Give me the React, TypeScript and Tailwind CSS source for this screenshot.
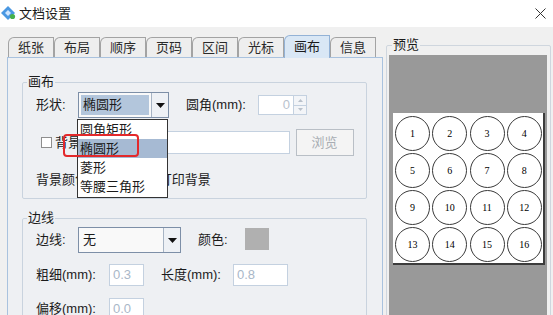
import React from 'react';

const tabs = ['纸张', '布局', '顺序', '页码', '区间', '光标', '画布', '信息'];
const shapes = ['圆角矩形', '椭圆形', '菱形', '等腰三角形'];

function Arrow() {
    return (
        <svg width="9" height="5" viewBox="0 0 9 5">
            <path d="M0 0 H9 L4.5 5 Z" fill="#111" />
        </svg>
    );
}

function Combo({ value, width, selected }: { value: string; width: string; selected?: boolean }) {
    return (
        <div className={`${width} h-[26px] border border-[#7d8fa7] bg-[#f9f9f9] flex`}>
            <div className="flex-1 p-[2px]">
                <div className={`h-full pl-[2px] leading-[20px] ${selected ? 'bg-[#b3c6dc]' : ''}`}>{value}</div>
            </div>
            <div className="w-[17px] border-l border-[#a7b4c4] bg-[#eef1f5] flex items-center justify-center">
                <Arrow />
            </div>
        </div>
    );
}

function Field({ value, width }: { value: string; width: string }) {
    return (
        <div className={`${width} h-[22px] border border-[#c4d1e0] bg-white pl-[3px] leading-[20px] text-[#a9b7c8]`}>
            {value}
        </div>
    );
}

function Checkbox() {
    return <div className="w-[11px] h-[11px] border border-[#8e8e8e] bg-white shrink-0" />;
}

export default function App() {
    return (
        <div className="relative w-[553px] h-[315px] overflow-hidden bg-[#f0f0f0] text-[13px] text-[#1b1b1b] font-['Liberation_Sans','Noto_Sans_CJK_SC',sans-serif]">
            {/* title bar */}
            <div className="h-[27px] bg-white flex items-center pl-[1px] pr-[7px]">
                <svg width="15" height="15" viewBox="0 0 15 15" className="mr-[3px]">
                    <path d="M7 0 L14 7 L7 14 L0 7 Z" fill="#4a98e2" />
                    <path d="M4 7 L7 4 L10 7 L7 10 Z" fill="#cfe6ff" />
                    <circle cx="11.5" cy="10.5" r="2.6" fill="#47b04b" />
                </svg>
                <span className="leading-[16px]">文档设置</span>
                <svg width="11" height="11" viewBox="0 0 11 11" className="ml-auto">
                    <path d="M0.5 0.5 L10.5 10.5 M10.5 0.5 L0.5 10.5" stroke="#333" strokeWidth="1" />
                </svg>
            </div>

            <div className="flex pt-[9px]">
                {/* tab pane */}
                <div className="ml-[7px] w-[376px] flex flex-col">
                    <div className="h-[21px] flex items-end pl-px">
                        {tabs.map((t) =>
                            t === '画布' ? (
                                <div
                                    key={t}
                                    className="relative z-10 -mb-px w-[46px] h-[23px] border border-b-0 border-[#93b2d6] rounded-tl-[6px] bg-[#d9e7f5] flex items-center justify-center leading-[16px]"
                                >
                                    {t}
                                </div>
                            ) : (
                                <div
                                    key={t}
                                    className="w-[46px] h-[20px] border border-b-0 border-[#a3a3a3] rounded-tl-[6px] bg-[#eeeeee] flex items-center justify-center leading-[16px] text-[#2a2a2a]"
                                >
                                    {t}
                                </div>
                            )
                        )}
                    </div>
                    <div className="h-[270px] border border-[#a9c2de] bg-[#eef0f3] pl-[14px] pt-[16px]">
                        <fieldset className="w-[345px] border border-[#c9d3de] rounded-[2px] pb-[8px]">
                            <legend className="ml-[4px] px-px leading-[16px]">画布</legend>
                            <div className="mt-[2px] h-[26px] flex items-center pl-[13px]">
                                <span className="w-[42px]">形状:</span>
                                <Combo value="椭圆形" width="w-[91px]" selected />
                                <span className="ml-[17px] w-[72px]">圆角(mm):</span>
                                <div className="w-[36px] h-[20px] border border-[#c4d1e0] bg-white text-right pr-[3px] leading-[18px] text-[#b8c2ce]">
                                    0
                                </div>
                                <div className="w-[13px] h-[20px] flex flex-col border border-l-0 border-[#c4d1e0]">
                                    <div className="flex-1 bg-[#f3f5f8] border-b border-[#c4d1e0] flex items-center justify-center">
                                        <svg width="5" height="3" viewBox="0 0 5 3"><path d="M0 3 L2.5 0 L5 3 Z" fill="#b9c1cb" /></svg>
                                    </div>
                                    <div className="flex-1 bg-[#f3f5f8] flex items-center justify-center">
                                        <svg width="5" height="3" viewBox="0 0 5 3"><path d="M0 0 H5 L2.5 3 Z" fill="#b9c1cb" /></svg>
                                    </div>
                                </div>
                            </div>
                            <div className="mt-[11px] h-[27px] flex items-center pl-[18px]">
                                <Checkbox />
                                <span className="ml-[3px]">背景图片:</span>
                                <div className="ml-[19px] w-[160px] h-[23px] border border-[#c4d1e0] bg-white" />
                                <div className="ml-[6px] w-[58px] h-[27px] border border-[#b9bfc6] bg-[#f4f4f4] flex items-center justify-center text-[#a8adb3]">
                                    浏览
                                </div>
                            </div>
                            <div className="mt-[14px] h-[20px] flex items-center pl-[13px]">
                                <span>背景颜色:</span>
                                <div className="ml-[6px] w-[24px] h-[18px] border border-[#c4d1e0] bg-white" />
                                <div className="ml-[22px]">
                                    <Checkbox />
                                </div>
                                <span className="ml-[4px]">打印背景</span>
                            </div>
                        </fieldset>

                        <fieldset className="mt-[11px] w-[345px] border border-[#c9d3de] rounded-[2px] pb-[8px]">
                            <legend className="ml-[4px] px-px leading-[16px]">边线</legend>
                            <div className="mt-px h-[26px] flex items-center pl-[13px]">
                                <span className="w-[42px]">边线:</span>
                                <Combo value="无" width="w-[103px]" />
                                <span className="ml-[17px] w-[47px]">颜色:</span>
                                <div className="w-[24px] h-[22px] bg-[#b0b0b0] -mt-[3px]" />
                            </div>
                            <div className="mt-[11px] h-[22px] flex items-center pl-[13px]">
                                <span className="w-[73px]">粗细(mm):</span>
                                <Field value="0.3" width="w-[35px]" />
                                <span className="ml-[17px] w-[72px]">长度(mm):</span>
                                <Field value="0.8" width="w-[55px]" />
                            </div>
                            <div className="mt-[12px] h-[22px] flex items-center pl-[13px]">
                                <span className="w-[73px]">偏移(mm):</span>
                                <Field value="0.0" width="w-[35px]" />
                            </div>
                        </fieldset>
                    </div>
                </div>

                {/* preview */}
                <fieldset className="ml-[3px] mt-px w-[165px] h-[300px] border border-[#cfd6de] rounded-[2px]">
                    <legend className="ml-[5px] px-px leading-[16px]">预览</legend>
                    <div className="mt-[2px] ml-[2px] w-[158px] h-[270px] bg-[#999999] pt-[58px] pl-[4px]">
                        <div className="w-[152px] h-[152px] bg-white border-r-2 border-b-2 border-[#3c3c3c] grid grid-cols-4 content-start pl-px pt-[2px] font-['Liberation_Serif',serif] text-[10px] text-black">
                            {Array.from({ length: 16 }, (_, i) => (
                                <div key={i} className="w-[37px] h-[37px] flex items-center justify-center">
                                    <div className="w-[35px] h-[35px] rounded-full border-[1.5px] border-[#3a3a3a] flex items-center justify-center">
                                        {i + 1}
                                    </div>
                                </div>
                            ))}
                        </div>
                    </div>
                </fieldset>
            </div>

            {/* open dropdown list */}
            <div className="absolute left-[77px] top-[119px] w-[91px] h-[79px] border border-[#333] bg-white">
                {shapes.map((s) => (
                    <div key={s} className={`h-[19px] leading-[19px] pl-[2px] ${s === '椭圆形' ? 'bg-[#a6bad3]' : ''}`}>
                        {s}
                    </div>
                ))}
            </div>

            {/* annotation */}
            <div className="absolute left-[63px] top-[134px] w-[76px] h-[23px] border-2 border-[#e3292b] rounded-[4px]" />
        </div>
    );
}
